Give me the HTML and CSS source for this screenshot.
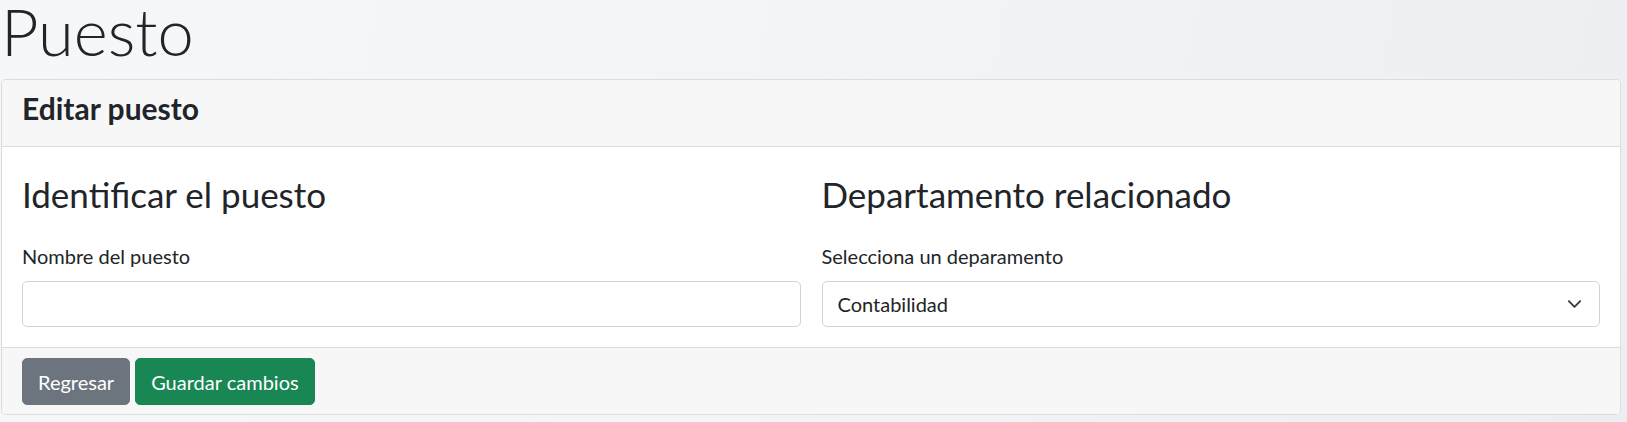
FILE: index.html
```html
<!DOCTYPE html>
<html lang="es">
<head>
<meta charset="utf-8">
<title>Puesto</title>
<link rel="stylesheet" href="styles.css">
</head>
<body>
<div class="page">
  <h1 class="page-title">Puesto</h1>
  <div class="card">
    <div class="card-header">
      <h4 class="card-title">Editar puesto</h4>
    </div>
    <div class="card-body">
      <div class="cols">
        <div class="col">
          <h3 class="section-title">Identificar el puesto</h3>
          <label class="form-label" for="nombre">Nombre del puesto</label>
          <input id="nombre" class="form-control" type="text">
        </div>
        <div class="col">
          <h3 class="section-title">Departamento relacionado</h3>
          <label class="form-label" for="depto">Selecciona un deparamento</label>
          <div class="select-wrap">
            <select id="depto" class="form-control form-select">
              <option>Contabilidad</option>
            </select>
            <svg class="select-chevron" viewBox="0 0 16 16" width="15" height="15" aria-hidden="true">
              <path d="M2 5l6 6 6-6" fill="none" stroke="#343a40" stroke-width="2" stroke-linecap="round" stroke-linejoin="round"/>
            </svg>
          </div>
        </div>
      </div>
    </div>
    <div class="card-footer">
      <button class="btn btn-secondary" type="button">Regresar</button>
      <button class="btn btn-success" type="button">Guardar cambios</button>
    </div>
  </div>
</div>
</body>
</html>
```
FILE: styles.css
```css
* { box-sizing: border-box; }

html, body {
  margin: 0;
  padding: 0;
}

body {
  min-height: 422px;
  background: linear-gradient(100deg, #f6f7f9 0%, #f3f4f6 50%, #eceef1 100%);
  font-family: Lato, "Noto Sans", sans-serif;
  font-size: 20px;
  line-height: 30px;
  color: #212529;
  overflow: hidden;
}

.page {
  padding-left: 1px;
  width: 1621px;
}

.page-title {
  margin: 0 0 17px 0;
  font-size: 65px;
  line-height: 62px;
  font-weight: 300;
  color: #212529;
}

.card {
  width: 1620px;
  background: #fff;
  border: 1px solid #dcdcdd;
  border-radius: 5px;
  overflow: hidden;
}

.card-header {
  padding: 10px 20px;
  background: #f7f7f7;
  border-bottom: 1px solid #dcdcdd;
}

.card-title {
  margin: 0 0 10px 0;
  font-size: 30px;
  line-height: 36px;
  font-weight: 700;
}

.card-body {
  padding: 20px;
}

.cols {
  display: grid;
  grid-template-columns: 1fr 1fr;
  column-gap: 21px;
}

.col {
  display: flex;
  flex-direction: column;
}

.section-title {
  margin: 6px 0 26px 0;
  font-size: 35px;
  line-height: 42px;
  font-weight: 400;
}

.form-label {
  display: block;
  margin-bottom: 10px;
  font-size: 20px;
  line-height: 30px;
}

.form-control {
  display: block;
  width: 100%;
  height: 46px;
  margin: 0;
  padding: 7px 15px;
  font-family: Lato, "Noto Sans", sans-serif;
  font-size: 20px;
  line-height: 30px;
  color: #212529;
  background: #fff;
  border: 1px solid #ced4da;
  border-radius: 5px;
  outline: none;
}

.select-wrap {
  position: relative;
}

.form-select {
  appearance: none;
  -webkit-appearance: none;
  padding-right: 50px;
}

.select-chevron {
  position: absolute;
  right: 18.5px;
  top: 50%;
  transform: translateY(-50%);
  pointer-events: none;
}

.card-footer {
  display: flex;
  gap: 5px;
  padding: 10px 20px 9px 20px;
  background: #f7f7f7;
  border-top: 1px solid #dcdcdd;
}

.btn {
  display: inline-block;
  margin: 0;
  padding: 7.5px 15px;
  font-family: Lato, "Noto Sans", sans-serif;
  font-size: 20px;
  line-height: 30px;
  color: #fff;
  border: 1px solid transparent;
  border-radius: 5px;
  cursor: pointer;
}

.btn-secondary {
  background: #6c757d;
  border-color: #6c757d;
}

.btn-success {
  background: #198754;
  border-color: #198754;
}
```
